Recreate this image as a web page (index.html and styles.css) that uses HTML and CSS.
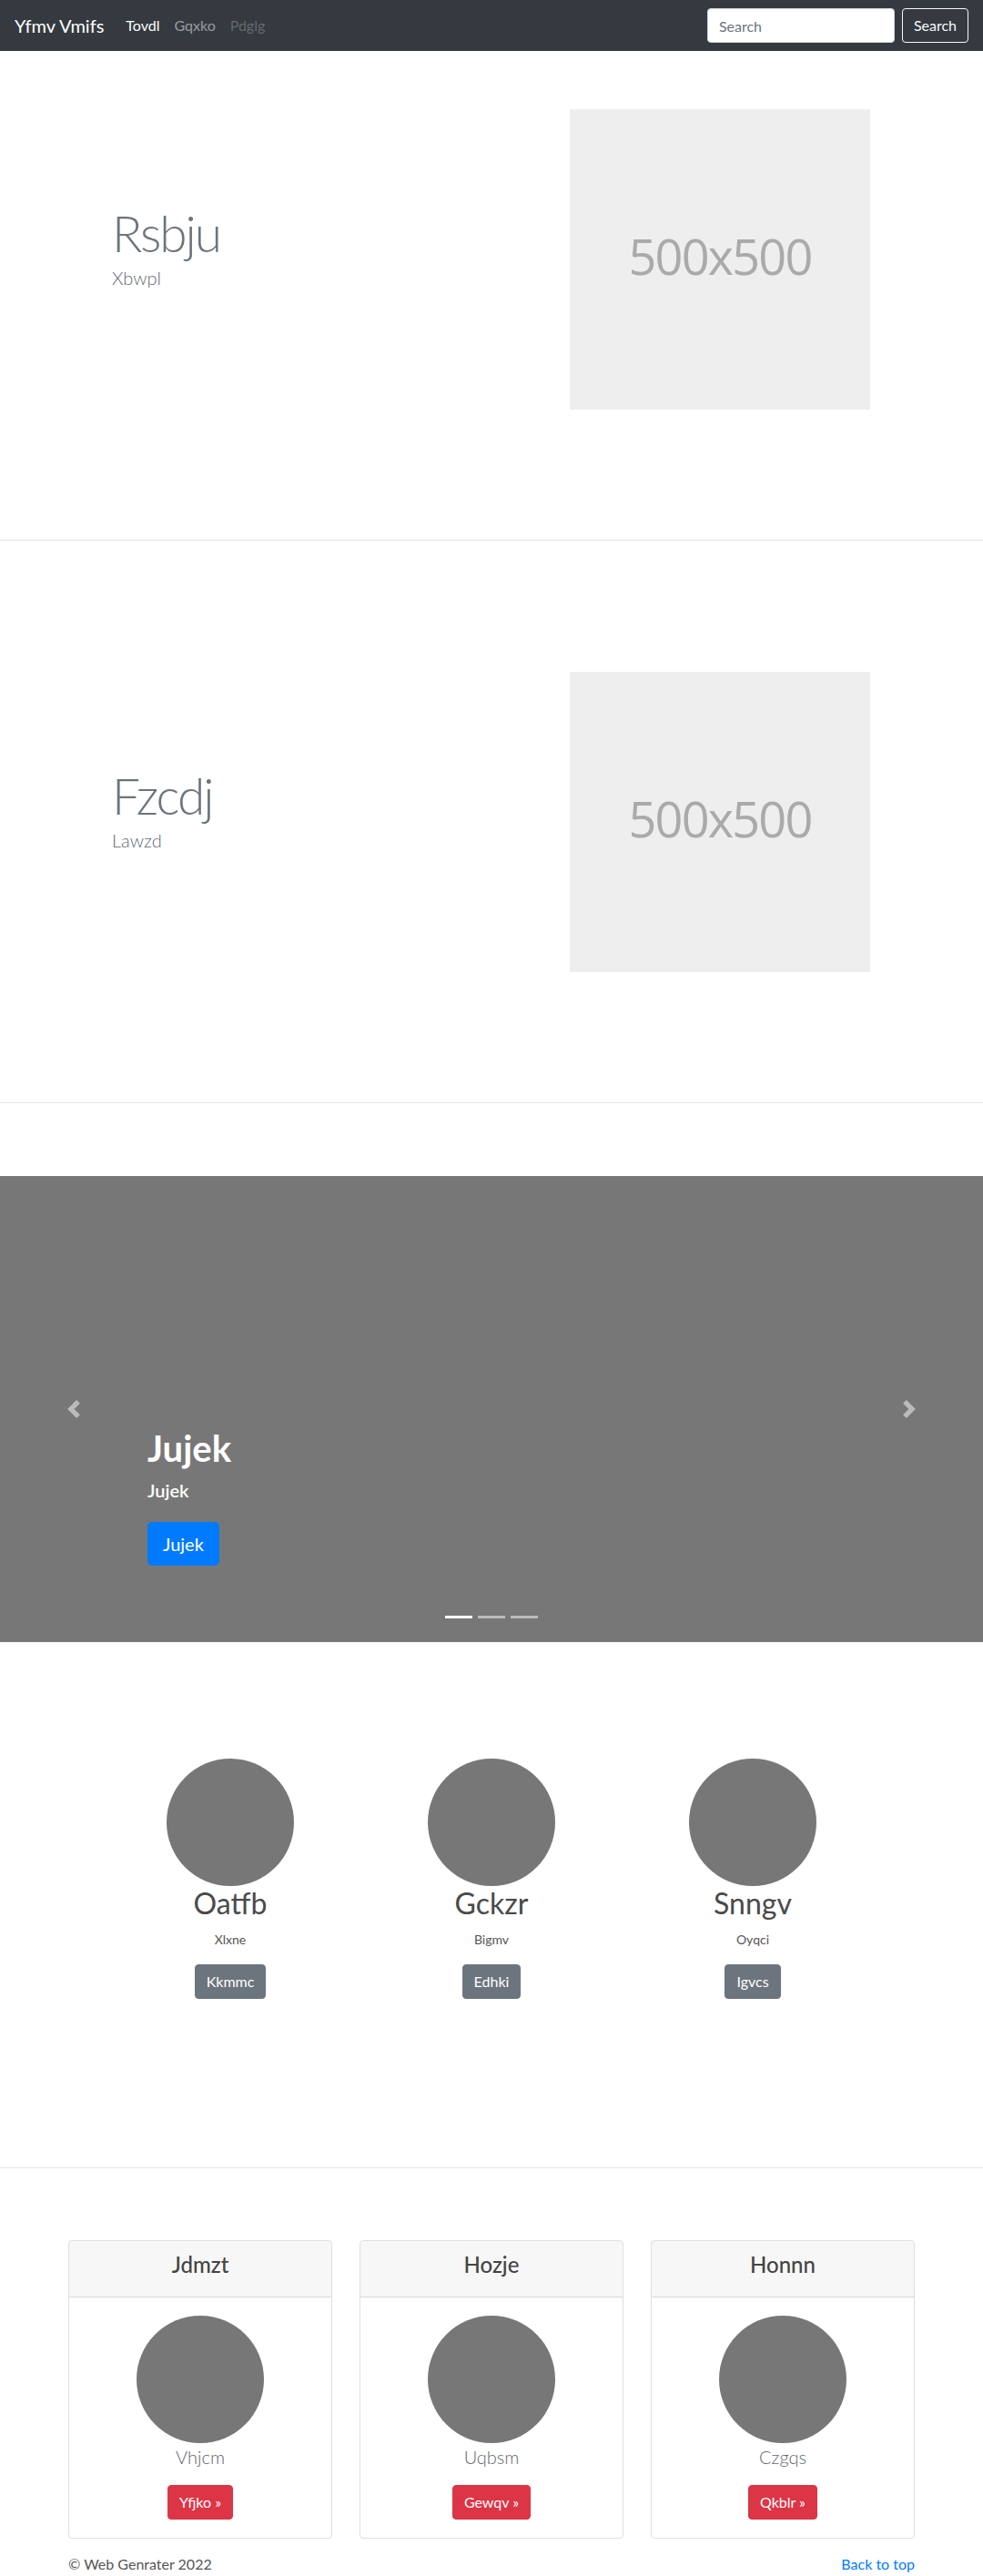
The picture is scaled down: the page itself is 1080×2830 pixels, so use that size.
FILE: index.html
```html
<!DOCTYPE html>
<html lang="en">
<head>
<meta charset="utf-8">
<title>Yfmv Vmifs</title>
<link rel="stylesheet" href="styles.css">
</head>
<body>
<nav class="navbar">
  <a class="brand" href="#">Yfmv Vmifs</a>
  <ul class="nav">
    <li><a class="nav-link active" href="#">Tovdl</a></li>
    <li><a class="nav-link" href="#">Gqxko</a></li>
    <li><a class="nav-link disabled" href="#">Pdglg</a></li>
  </ul>
  <form class="search">
    <input class="search-input" type="text" placeholder="Search">
    <button class="btn btn-outline-light" type="button">Search</button>
  </form>
</nav>

<main>
  <section class="featurette featurette-first">
    <div class="container feat-row">
      <div class="feat-text">
        <h1 class="feat-heading">Rsbju</h1>
        <p class="feat-lead">Xbwpl</p>
      </div>
      <div class="feat-media">
        <svg class="placeholder" width="330" height="330" viewBox="0 0 330 330">
          <rect width="330" height="330" fill="#eeeeee"/>
          <text x="165" y="182" text-anchor="middle" class="ph-text">500x500</text>
        </svg>
      </div>
    </div>
  </section>
  <hr class="divider">

  <section class="featurette">
    <div class="container feat-row">
      <div class="feat-text">
        <h1 class="feat-heading">Fzcdj</h1>
        <p class="feat-lead">Lawzd</p>
      </div>
      <div class="feat-media">
        <svg class="placeholder" width="330" height="330" viewBox="0 0 330 330">
          <rect width="330" height="330" fill="#eeeeee"/>
          <text x="165" y="182" text-anchor="middle" class="ph-text">500x500</text>
        </svg>
      </div>
    </div>
  </section>
  <hr class="divider">

  <section class="carousel">
    <div class="carousel-caption">
      <h1 class="caption-title">Jujek</h1>
      <p class="caption-sub">Jujek</p>
      <p class="caption-action"><a class="btn btn-lg btn-primary" href="#">Jujek</a></p>
    </div>
    <a class="carousel-control prev" href="#">
      <svg class="control-icon" width="20" height="20" viewBox="0 0 8 8"><path fill="#fff" d="M5.25 0l-4 4 4 4 1.5-1.5L4.25 4l2.5-2.5L5.25 0z"/></svg>
    </a>
    <a class="carousel-control next" href="#">
      <svg class="control-icon" width="20" height="20" viewBox="0 0 8 8"><path fill="#fff" d="M2.75 0l-1.5 1.5L3.75 4l-2.5 2.5L2.75 8l4-4-4-4z"/></svg>
    </a>
    <ol class="indicators">
      <li class="indicator active"></li>
      <li class="indicator"></li>
      <li class="indicator"></li>
    </ol>
  </section>

  <section class="marketing">
    <div class="marketing-row">
      <div class="marketing-col">
        <div class="avatar"></div>
        <h2 class="mk-title">Oatfb</h2>
        <p class="mk-text">Xlxne</p>
        <p class="mk-action"><a class="btn btn-secondary" href="#">Kkmmc</a></p>
      </div>
      <div class="marketing-col">
        <div class="avatar"></div>
        <h2 class="mk-title">Gckzr</h2>
        <p class="mk-text">Bigmv</p>
        <p class="mk-action"><a class="btn btn-secondary" href="#">Edhki</a></p>
      </div>
      <div class="marketing-col">
        <div class="avatar"></div>
        <h2 class="mk-title">Snngv</h2>
        <p class="mk-text">Oyqci</p>
        <p class="mk-action"><a class="btn btn-secondary" href="#">Igvcs</a></p>
      </div>
    </div>
  </section>
  <hr class="divider divider-cards">

  <section class="container cards">
    <div class="card">
      <div class="card-header"><h4 class="card-title">Jdmzt</h4></div>
      <div class="card-body">
        <div class="avatar"></div>
        <p class="card-lead">Vhjcm</p>
        <a class="btn btn-danger" href="#">Yfjko &raquo;</a>
      </div>
    </div>
    <div class="card">
      <div class="card-header"><h4 class="card-title">Hozje</h4></div>
      <div class="card-body">
        <div class="avatar"></div>
        <p class="card-lead">Uqbsm</p>
        <a class="btn btn-danger" href="#">Gewqv &raquo;</a>
      </div>
    </div>
    <div class="card">
      <div class="card-header"><h4 class="card-title">Honnn</h4></div>
      <div class="card-body">
        <div class="avatar"></div>
        <p class="card-lead">Czgqs</p>
        <a class="btn btn-danger" href="#">Qkblr &raquo;</a>
      </div>
    </div>
  </section>

  <footer class="container footer">
    <p class="copy">&copy; Web Genrater 2022</p>
    <p class="back"><a href="#">Back to top</a></p>
  </footer>
</main>
</body>
</html>
```

FILE: styles.css
```css
* { box-sizing: border-box; }

html, body {
  margin: 0;
  padding: 0;
}

body {
  font-family: Lato, "Liberation Sans", sans-serif;
  font-size: 16px;
  line-height: 1.5;
  color: #212529;
  background: #fff;
}

a { text-decoration: none; }

/* ---------- navbar ---------- */
.navbar {
  display: flex;
  align-items: center;
  height: 56px;
  padding: 8px 16px;
  background: #343a40;
}

.brand {
  font-size: 20px;
  line-height: 30px;
  padding: 5px 0;
  margin-right: 16px;
  color: #fff;
}

.nav {
  display: flex;
  list-style: none;
  margin: 0;
  padding: 0;
}

.nav-link {
  display: block;
  padding: 8px 8px;
  color: rgba(255, 255, 255, 0.5);
}

.nav-link.active { color: #fff; }
.nav-link.disabled { color: rgba(255, 255, 255, 0.25); }

.search {
  display: flex;
  align-items: center;
  margin-left: auto;
}

.search-input {
  width: 206px;
  height: 38px;
  padding: 6px 12px;
  margin-right: 8px;
  font-family: inherit;
  font-size: 16px;
  color: #495057;
  background: #fff;
  border: 1px solid #ced4da;
  border-radius: 4px;
}

.search-input::placeholder { color: #6c757d; }

/* ---------- buttons ---------- */
.btn {
  display: inline-block;
  font-family: inherit;
  font-size: 16px;
  line-height: 24px;
  padding: 6px 12px;
  border: 1px solid transparent;
  border-radius: 4px;
  cursor: pointer;
  text-align: center;
}

.btn-outline-light {
  color: #f8f9fa;
  background: transparent;
  border-color: #f8f9fa;
}

.btn-lg {
  font-size: 20px;
  line-height: 30px;
  padding: 8px 16px;
  border-radius: 5px;
}

.btn-primary { color: #fff; background: #007bff; border-color: #007bff; }
.btn-secondary { color: #fff; background: #6c757d; border-color: #6c757d; }
.btn-danger { color: #fff; background: #dc3545; border-color: #dc3545; }

/* ---------- featurettes ---------- */
.container {
  width: 960px;
  margin: 0 auto;
}

.featurette {
  padding: 64px 0 143px;
}

.feat-row {
  display: flex;
  align-items: center;
}

.feat-text {
  width: 480px;
  padding-left: 63px;
  padding-bottom: 27px;
}

.feat-heading {
  margin: 0;
  font-size: 55px;
  font-weight: 300;
  line-height: 1.22;
  letter-spacing: -2px;
  color: #6c757d;
}

.feat-lead {
  margin: 0;
  font-size: 20px;
  font-weight: 300;
  line-height: 30px;
  color: #5f6870;
}

.feat-media {
  width: 480px;
  padding-left: 86px;
}

.placeholder { display: block; }

.ph-text {
  font-family: "Open Sans", "Noto Sans", sans-serif;
  font-size: 54px;
  letter-spacing: -1.8px;
  fill: #aaaaaa;
}

.divider {
  margin: 0 0 80px;
  height: 1px;
  border: 0;
  background: #e5e5e5;
}

/* ---------- carousel ---------- */
.carousel {
  position: relative;
  height: 512px;
  background: #777;
}

.carousel-caption {
  position: absolute;
  left: 15%;
  right: 15%;
  bottom: 48px;
  padding: 20px 0;
  color: #fff;
  z-index: 10;
}

.caption-title {
  margin: 0 0 8px;
  font-size: 40px;
  font-weight: 700;
  line-height: 48px;
}

.caption-sub {
  margin: 0 0 21px;
  font-size: 20px;
  font-weight: 600;
  line-height: 28px;
}

.caption-action { margin: 0 0 16px; }

.carousel-control {
  position: absolute;
  top: 0;
  bottom: 0;
  width: 15%;
  display: flex;
  align-items: center;
  justify-content: center;
  opacity: 0.5;
}

.carousel-control.prev { left: 0; }
.carousel-control.next { right: 0; }

.control-icon { display: block; }

.indicators {
  position: absolute;
  left: 0;
  right: 0;
  bottom: 0;
  display: flex;
  justify-content: center;
  list-style: none;
  margin: 0 0 16px;
  padding: 0;
}

.indicator {
  width: 30px;
  height: 23px;
  margin: 0 3px;
  border-top: 10px solid transparent;
  border-bottom: 10px solid transparent;
  background: #fff;
  background-clip: padding-box;
  opacity: 0.5;
}

.indicator.active { opacity: 1; }

/* ---------- marketing ---------- */
.marketing {
  padding: 128px 0 185px;
}

.marketing-row {
  display: flex;
  width: 861px;
  margin: 0 auto;
}

.marketing-col {
  width: 287px;
  text-align: center;
}

.avatar {
  width: 140px;
  height: 140px;
  margin: 0 auto;
  border-radius: 50%;
  background: #777;
}

.mk-title {
  margin: 0 0 10px;
  font-size: 32px;
  font-weight: 400;
  line-height: 1.2;
  color: #4a4a4a;
}

.mk-text {
  margin: 0 0 17px;
  font-size: 14px;
  line-height: 21px;
  color: #555;
}

.mk-action { margin: 0; }

.divider-cards { margin-bottom: 79px; }

/* ---------- cards ---------- */
.cards {
  display: grid;
  grid-template-columns: repeat(3, 1fr);
  gap: 30px;
  padding: 0 15px;
}

.card {
  border: 1px solid rgba(0, 0, 0, 0.125);
  border-radius: 4px;
  overflow: hidden;
  text-align: center;
}

.card-header {
  padding: 12px 20px;
  background: rgba(0, 0, 0, 0.03);
  border-bottom: 1px solid rgba(0, 0, 0, 0.125);
}

.card-title {
  margin: 0 0 8px;
  font-size: 24px;
  font-weight: 500;
  line-height: 1.2;
  color: #444;
}

.card-body {
  padding: 20px;
}

.card-lead {
  margin: 0 0 16px;
  font-size: 20px;
  font-weight: 300;
  line-height: 30px;
  color: #5f6870;
}

/* ---------- footer ---------- */
.footer {
  display: flex;
  justify-content: space-between;
  padding: 16px 15px 0;
}

.footer p { margin: 0; }

.copy { color: #555; }

.back a { color: #007bff; }
```
